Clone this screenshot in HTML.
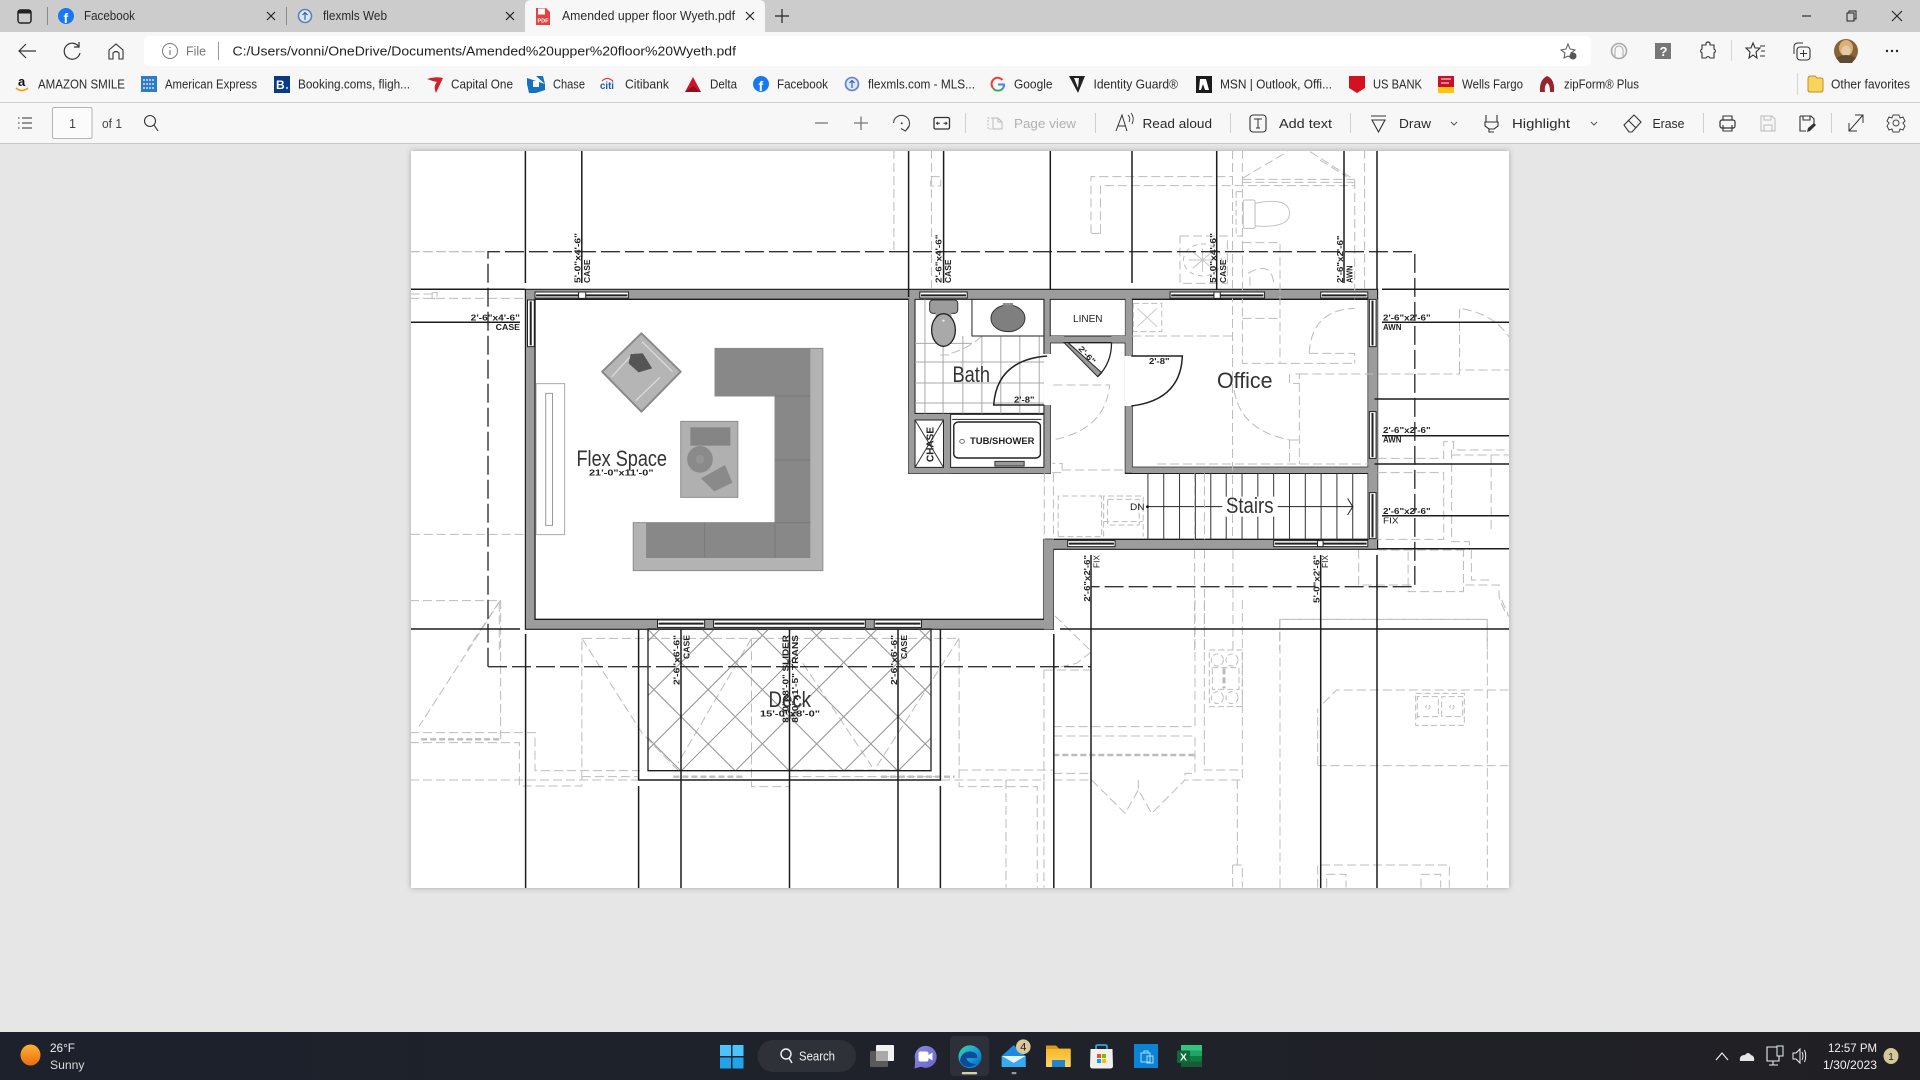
<!DOCTYPE html>
<html><head><meta charset="utf-8"><title>Amended upper floor Wyeth.pdf</title>
<style>
html,body{margin:0;padding:0;width:1920px;height:1080px;overflow:hidden;background:#e6e6e6}
svg{display:block;font-family:"Liberation Sans",sans-serif}
svg *{vector-effect:non-scaling-stroke}
.t{font-size:12.5px;fill:#2a2a2a}
.g{fill:none;stroke:#bcbcbc;stroke-width:1;stroke-dasharray:9 4}
.g2{fill:none;stroke:#bcbcbc;stroke-width:2.4;stroke-dasharray:6 3}
.k{fill:none;stroke:#1c1c1c;stroke-width:1.5}
.d{fill:none;stroke:#333;stroke-width:1.4;stroke-dasharray:19 5}
.l{font-size:8px;font-weight:bold;fill:#222}
.r{font-size:22px;fill:#333}
.w{fill:#fff;stroke:#222;stroke-width:1}
.m{fill:none;stroke:#222;stroke-width:2}
</style></head><body>
<svg width="1920" height="1080" viewBox="0 0 1920 1080" xmlns="http://www.w3.org/2000/svg">
<defs>
<clipPath id="deckclip"><rect x="648" y="629" width="283" height="142"/></clipPath>
<clipPath id="pg"><rect x="411" y="151" width="1098" height="737"/></clipPath>
<linearGradient id="sun" x1="0" y1="0" x2="0" y2="1"><stop offset="0" stop-color="#f9b233"/><stop offset="1" stop-color="#ee6c12"/></linearGradient>
<linearGradient id="tb" x1="0" y1="0" x2="1" y2="0"><stop offset="0" stop-color="#1c212b"/><stop offset=".5" stop-color="#1f222a"/><stop offset="1" stop-color="#202024"/></linearGradient>
<linearGradient id="edge" x1="0" y1="0" x2="1" y2="1"><stop offset="0" stop-color="#3bd4a0"/><stop offset=".55" stop-color="#1a9ad8"/><stop offset="1" stop-color="#0b5fb4"/></linearGradient>
<linearGradient id="meet" x1="0" y1="0" x2="1" y2="1"><stop offset="0" stop-color="#8a8ae8"/><stop offset="1" stop-color="#6a62c8"/></linearGradient>
<linearGradient id="fold" x1="0" y1="0" x2="0" y2="1"><stop offset="0" stop-color="#f9b82a"/><stop offset="1" stop-color="#fcd565"/></linearGradient>
</defs>

<!-- window chrome -->
<rect x="0" y="0" width="1920" height="32" fill="#cccccc"/>
<rect x="0" y="32" width="1920" height="70" fill="#f7f7f7"/>
<rect x="0" y="102" width="1920" height="1" fill="#cfcfcf"/>
<rect x="0" y="103" width="1920" height="40" fill="#f7f7f7"/>
<rect x="0" y="143" width="1920" height="1" fill="#c9c9c9"/>
<rect x="0" y="144" width="1920" height="888" fill="#e6e6e6"/>

<!-- tabs -->
<path d="M525 32 V6 Q525 0 531 0 H759 Q765 0 765 6 V32 Z" fill="#f7f7f7"/>
<rect x="18" y="10" width="13" height="13" rx="2.5" fill="none" stroke="#222" stroke-width="1.5"/><rect x="18" y="10" width="13" height="3.5" fill="#222"/>
<rect x="47" y="7" width="1" height="18" fill="#8a8a8a"/><rect x="286" y="7" width="1" height="18" fill="#8a8a8a"/>
<circle cx="66" cy="16" r="8" fill="#1877f2"/><text x="63.5" y="23" font-size="14" font-weight="bold" fill="#fff">f</text>
<text class="t" x="84" y="20" textLength="51" lengthAdjust="spacingAndGlyphs">Facebook</text>
<path d="M267 12 L275 20 M275 12 L267 20" stroke="#222" stroke-width="1.2" fill="none"/>
<circle cx="305" cy="16" r="6.5" fill="#dce6f7" stroke="#5b82c4" stroke-width="1.6"/><path d="M305 20 V13 M302.5 15 L305 12.5 L307.5 15" stroke="#2e5aa8" stroke-width="1.1" fill="none"/>
<text class="t" x="323" y="20" textLength="64" lengthAdjust="spacingAndGlyphs">flexmls Web</text>
<path d="M506 12 L514 20 M514 12 L506 20" stroke="#222" stroke-width="1.2" fill="none"/>
<path d="M536 8 H546 L550 12 V25 H536 Z" fill="#e8403f"/><rect x="538" y="8.5" width="7" height="6" fill="#fff"/><text x="537.5" y="22.5" font-size="5.5" font-weight="bold" fill="#fff">PDF</text>
<text class="t" x="562" y="20" textLength="173" lengthAdjust="spacingAndGlyphs">Amended upper floor Wyeth.pdf</text>
<path d="M746 12 L754 20 M754 12 L746 20" stroke="#222" stroke-width="1.2" fill="none"/>
<path d="M782 9 V23 M775 16 H789" stroke="#222" stroke-width="1.2" fill="none"/>
<path d="M1802 16 H1811" stroke="#222" stroke-width="1.1"/>
<rect x="1847" y="13" width="7" height="8" fill="none" stroke="#222" stroke-width="1"/><path d="M1849 13 V11 H1856 V19 H1854" fill="none" stroke="#222" stroke-width="1"/>
<path d="M1892 11 L1902 21 M1902 11 L1892 21" stroke="#222" stroke-width="1.1" fill="none"/>

<!-- address row -->
<rect x="144" y="36" width="1447" height="30" rx="5" fill="#fff"/>
<path d="M36 51 H19 M26 44 L19 51 L26 58" fill="none" stroke="#333" stroke-width="1.2"/>
<path d="M79 47 A8 8 0 1 0 80 53 M79 42 V47 H74" fill="none" stroke="#333" stroke-width="1.2"/>
<path d="M109 50 L116 44 L123 50 V59 H119 V53 Q116 50 113 53 V59 H109 Z" fill="none" stroke="#333" stroke-width="1.1"/>
<circle cx="170" cy="51" r="7.5" fill="none" stroke="#777" stroke-width="1"/><path d="M170 50 V55 M170 47 V48" stroke="#777" stroke-width="1.1"/>
<text class="t" x="186" y="55.5" textLength="20" lengthAdjust="spacingAndGlyphs" style="fill:#777">File</text>
<rect x="218" y="42" width="1" height="18" fill="#999"/>
<text class="t" x="232.5" y="55.5" textLength="503.5" lengthAdjust="spacingAndGlyphs" style="font-size:13px;fill:#222">C:/Users/vonni/OneDrive/Documents/Amended%20upper%20floor%20Wyeth.pdf</text>
<path d="M1568 44 L1570 49 L1575 50 L1571 53 L1572 58 L1568 56 L1564 58 L1565 53 L1561 50 L1566 49 Z" fill="none" stroke="#555" stroke-width="1"/><circle cx="1573" cy="56" r="3.5" fill="#555"/>
<circle cx="1619" cy="51" r="7.5" fill="none" stroke="#aaa" stroke-width="1.6"/><path d="M1615 57 V50 A4 4 0 0 1 1623 50 V57" fill="none" stroke="#aaa" stroke-width="1"/>
<rect x="1655" y="43" width="16" height="16" fill="#777"/><text x="1659.5" y="56" font-size="13" font-weight="bold" fill="#fff">?</text>
<path d="M1702 45 H1706 V43 Q1708 41 1710 43 V45 H1714 V49 Q1717 51 1714 53 V58 H1710 Q1708 55 1706 58 H1702 V53 Q1699 51 1702 49 Z" fill="none" stroke="#333" stroke-width="1.1"/>
<rect x="1731" y="40" width="1" height="21" fill="#d5d5d5"/>
<path d="M1753 43 L1755 48 L1760 48 L1756 52 L1757 58 L1753 55 L1749 58 L1750 52 L1746 48 L1751 48 Z" fill="none" stroke="#333" stroke-width="1.1"/><path d="M1760 46 H1765 M1761 51 H1765 M1760 56 H1765" stroke="#333" stroke-width="1"/>
<rect x="1797" y="47" width="13" height="13" rx="3" fill="none" stroke="#333" stroke-width="1.1"/><path d="M1803.5 50 V57 M1800 53.5 H1807 M1794 54 V47 Q1794 43 1798 43 H1803" fill="none" stroke="#333" stroke-width="1"/>
<ellipse cx="1846" cy="51" rx="12" ry="12" fill="#8a6238"/><ellipse cx="1846" cy="48" rx="7" ry="8" fill="#d8b078"/><ellipse cx="1846" cy="51" rx="4.5" ry="5.5" fill="#e8c9a6"/><path d="M1836 58 Q1846 52 1856 58 L1852 63 H1840 Z" fill="#5f4a33"/>
<circle cx="1887" cy="51" r="1.2" fill="#222"/><circle cx="1892" cy="51" r="1.2" fill="#222"/><circle cx="1897" cy="51" r="1.2" fill="#222"/>

<!-- favorites -->
<text x="18" y="86" font-size="13" font-weight="bold" fill="#111">a</text><path d="M16 88 Q22 93 28 88" fill="none" stroke="#f90" stroke-width="1.5"/>
<text class="t" x="38" y="88.5" textLength="87" lengthAdjust="spacingAndGlyphs">AMAZON SMILE</text>
<rect x="141" y="76" width="16" height="16" fill="#2f7cc4"/><path d="M143 80 H155 M143 84 H155 M143 88 H155" stroke="#cfe2f5" stroke-width="1.4" stroke-dasharray="2 1"/>
<text class="t" x="165" y="88.5" textLength="92" lengthAdjust="spacingAndGlyphs">American Express</text>
<rect x="274" y="76" width="16" height="17" fill="#0b3a82"/><text x="276" y="89" font-size="12" font-weight="bold" fill="#fff">B</text><circle cx="287" cy="88" r="1.2" fill="#7ec8f2"/>
<text class="t" x="298" y="88.5" textLength="112" lengthAdjust="spacingAndGlyphs">Booking.coms, fligh...</text>
<path d="M427 79 Q436 76 443 78 L436 93 Q433 86 437 82 Q432 81 427 79Z" fill="#d0222d"/>
<text class="t" x="451" y="88.5" textLength="62" lengthAdjust="spacingAndGlyphs">Capital One</text>
<path d="M536 76 H543 L545 84 M545 84 V90 L536 93 H529 L527 84 V78 Z" fill="#1470c0"/><rect x="533" y="81" width="6" height="6" fill="#f7f7f7"/>
<text class="t" x="553" y="88.5" textLength="32" lengthAdjust="spacingAndGlyphs">Chase</text>
<text x="600" y="89" font-size="10" font-weight="bold" fill="#1560a8" textLength="14" lengthAdjust="spacingAndGlyphs">citi</text><path d="M602 81 Q607 76 613 81" fill="none" stroke="#d22" stroke-width="1"/>
<text class="t" x="625" y="88.5" textLength="44" lengthAdjust="spacingAndGlyphs">Citibank</text>
<path d="M693 77 L701 92 H685 Z" fill="#d3122a"/><path d="M693 86 L701 92 H685 Z" fill="#8d0f20"/>
<text class="t" x="710" y="88.5" textLength="27" lengthAdjust="spacingAndGlyphs">Delta</text>
<circle cx="761" cy="84" r="8" fill="#1877f2"/><text x="758.5" y="91" font-size="14" font-weight="bold" fill="#fff">f</text>
<text class="t" x="777" y="88.5" textLength="51" lengthAdjust="spacingAndGlyphs">Facebook</text>
<circle cx="852" cy="84" r="6.5" fill="#dce6f7" stroke="#5b82c4" stroke-width="1.6"/><path d="M852 88 V81 M849.5 83 L852 80.5 L854.5 83" stroke="#2e5aa8" stroke-width="1.1" fill="none"/>
<text class="t" x="868" y="88.5" textLength="107" lengthAdjust="spacingAndGlyphs">flexmls.com - MLS...</text>
<path d="M1002.5 80 A6 6 0 0 0 993 88" fill="none" stroke="#e94235" stroke-width="2"/><path d="M993 88 A6 6 0 0 0 1003 88" fill="none" stroke="#34a853" stroke-width="2"/><path d="M998 84.5 H1004 Q1004 87 1003 88" fill="none" stroke="#4285f4" stroke-width="2"/>
<text class="t" x="1014" y="88.5" textLength="38.5" lengthAdjust="spacingAndGlyphs">Google</text>
<path d="M1069 76 H1085 L1078 93 Z" fill="#222"/><path d="M1074 78 L1078 88 L1079 78Z" fill="#f7f7f7"/>
<text class="t" x="1093.5" y="88.5" textLength="84.5" lengthAdjust="spacingAndGlyphs">Identity Guard®</text>
<rect x="1196" y="76" width="16" height="17" fill="#1c1c1c"/><path d="M1200 79 L1206 79 L1209 90 L1205 90 L1203 84 L1201 90 H1199Z" fill="#fff"/>
<text class="t" x="1220" y="88.5" textLength="112" lengthAdjust="spacingAndGlyphs">MSN | Outlook, Offi...</text>
<path d="M1349 76 H1365 V88 L1357 93 L1349 88 Z" fill="#d4121f"/>
<text class="t" x="1373" y="88.5" textLength="49" lengthAdjust="spacingAndGlyphs">US BANK</text>
<rect x="1438" y="76" width="16" height="11" fill="#c8102e"/><rect x="1438" y="87" width="16" height="6" fill="#fcc60a"/><path d="M1441 79 H1451 M1441 83 H1449" stroke="#f3a8a8" stroke-width="1.5"/>
<text class="t" x="1462" y="88.5" textLength="61" lengthAdjust="spacingAndGlyphs">Wells Fargo</text>
<path d="M1540 92 Q1539 80 1547 76 Q1555 79 1554 92 H1550 Q1550 84 1547 83 Q1544 86 1545 92 Z" fill="#96232d"/>
<text class="t" x="1564" y="88.5" textLength="75" lengthAdjust="spacingAndGlyphs">zipForm® Plus</text>
<rect x="1797" y="73" width="1" height="22" fill="#d5d5d5"/>
<path d="M1808 79 Q1808 76 1811 76 H1815 L1817 78 H1821 Q1823 78 1823 80 V90 Q1823 92 1821 92 H1810 Q1808 92 1808 90 Z" fill="#f9d45c" stroke="#b9902a" stroke-width="1"/>
<text class="t" x="1831" y="88.5" textLength="79" lengthAdjust="spacingAndGlyphs">Other favorites</text>

<!-- pdf toolbar -->
<path d="M18 118 H19.5 M22 118 H32 M18 123 H19.5 M22 123 H32 M18 128 H19.5 M22 128 H32" stroke="#333" stroke-width="1.1" fill="none"/>
<rect x="52.5" y="107.5" width="39.5" height="31" rx="1.5" fill="#fbfbfb" stroke="#b5b5b5"/>
<text class="t" x="69" y="128" style="fill:#444">1</text>
<text class="t" x="102" y="128" textLength="20" lengthAdjust="spacingAndGlyphs" style="fill:#444">of 1</text>
<circle cx="150" cy="121" r="5.5" fill="none" stroke="#333" stroke-width="1.1"/><path d="M154 125 L158 131" stroke="#333" stroke-width="1.1"/>
<path d="M815 123 H828" stroke="#777" stroke-width="1.3"/>
<path d="M854 123 H868 M861 116.5 V130" stroke="#777" stroke-width="1.3"/>
<path d="M893.5 123 A8 8 0 1 1 906 130 M909 126 L905.5 131 L901 128.5" fill="none" stroke="#444" stroke-width="1.1"/><circle cx="901.7" cy="123.3" r="1" fill="#444"/>
<rect x="934" y="117.5" width="15.5" height="11.5" rx="1.5" fill="none" stroke="#333" stroke-width="1.3"/><path d="M936.5 123.3 H940 M943.5 123.3 H947 M938 122 L936.5 123.3 L938 124.6 M945.5 122 L947 123.3 L945.5 124.6" stroke="#333" stroke-width="1" fill="none"/>
<rect x="965" y="113" width="1" height="20" fill="#cfcfcf"/>
<path d="M993 118 H988 V129 H993" fill="none" stroke="#bbb" stroke-dasharray="2 1.5"/><path d="M993 118 H998 L1002 122 V129 H993 Z M998 118 V122 H1002" fill="none" stroke="#bbb"/>
<text class="t" x="1014" y="128" textLength="62" lengthAdjust="spacingAndGlyphs" style="fill:#b0b0b0;font-size:13px">Page view</text>
<rect x="1095" y="113" width="1" height="20" fill="#cfcfcf"/>
<path d="M1116 131 L1122 115 L1127 131 M1118 126 H1125" fill="none" stroke="#333" stroke-width="1"/><path d="M1128 115 Q1131 118 1129 122 M1131 113 Q1135 118 1132 124" fill="none" stroke="#333" stroke-width=".9"/>
<text class="t" x="1142.5" y="128" textLength="69.5" lengthAdjust="spacingAndGlyphs" style="font-size:13px">Read aloud</text>
<rect x="1230" y="113" width="1" height="20" fill="#cfcfcf"/>
<rect x="1250" y="115" width="16" height="17" rx="3" fill="none" stroke="#333" stroke-width="1.1"/><path d="M1254 119 H1262 M1258 119 V128 M1256 128 H1260" fill="none" stroke="#333"/>
<text class="t" x="1279" y="128" textLength="53" lengthAdjust="spacingAndGlyphs" style="font-size:13px">Add text</text>
<rect x="1350" y="113" width="1" height="20" fill="#cfcfcf"/>
<path d="M1371 116 H1386 M1372 120 H1385 L1378.5 132 Z" fill="none" stroke="#333" stroke-width="1.1"/>
<text class="t" x="1399" y="128" textLength="32" lengthAdjust="spacingAndGlyphs" style="font-size:13px">Draw</text>
<path d="M1451 122 L1454 125 L1457 122" fill="none" stroke="#555"/>
<path d="M1486 115 V122 M1497 115 V122 M1485 122 H1498 V126 L1494 129 H1489 L1485 126 Z M1489 129 V132 H1494" fill="none" stroke="#333" stroke-width="1.1"/>
<text class="t" x="1512" y="128" textLength="58" lengthAdjust="spacingAndGlyphs" style="font-size:13px">Highlight</text>
<path d="M1591 122 L1594 125 L1597 122" fill="none" stroke="#555"/>
<path d="M1624 125 L1634 115 L1641 122 L1632 132 H1629 Z M1628 120 L1636 128" fill="none" stroke="#333" stroke-width="1.1"/>
<text class="t" x="1652.5" y="128" textLength="32" lengthAdjust="spacingAndGlyphs" style="font-size:13px">Erase</text>
<rect x="1703" y="113" width="1" height="20" fill="#cfcfcf"/>
<rect x="1720" y="120" width="15" height="8" rx="2" fill="none" stroke="#333" stroke-width="1.2"/><path d="M1723 120 V116 H1732 V120 M1723 125 V131 H1732 V125" fill="none" stroke="#333" stroke-width="1.1"/>
<path d="M1761 116 H1772 L1775 119 V131 H1761 Z M1764 116 V120 H1771 V116 M1764 131 V125 H1772 V131" fill="none" stroke="#bbb" stroke-width="1"/>
<path d="M1800 116 H1811 L1814 119 V124 M1806 131 H1800 V116 M1803 116 V120 H1810 V116" fill="none" stroke="#333" stroke-width="1.1"/><path d="M1807 132 L1808 128 L1814 123 L1816 125 L1810 131 Z" fill="#333"/>
<rect x="1831" y="113" width="1" height="20" fill="#cfcfcf"/>
<path d="M1849 131 L1863 115 M1855 115 H1863 V123 M1849 123 V131 H1857" fill="none" stroke="#333" stroke-width="1"/>
<circle cx="1896" cy="123" r="3" fill="none" stroke="#444"/><path d="M1893 115 H1899 L1900 118 L1903 117 L1905 121 L1903 123 L1905 126 L1903 130 L1900 129 L1899 132 H1893 L1892 129 L1889 130 L1887 126 L1889 123 L1887 121 L1889 117 L1892 118 Z" fill="none" stroke="#444" stroke-width="1"/>

<!-- PDF page -->
<rect x="411" y="151" width="1098" height="737" fill="#fff" style="filter:drop-shadow(0 0 3px rgba(0,0,0,.28))"/>
<g clip-path="url(#pg)">

<!-- building walls -->
<path d="M525.4 289.3 H1377.6 V549.3 H1053.4 V629.3 H525.4 Z" fill="#9c9c9c" stroke="#1c1c1c" stroke-width="1.2"/>
<g transform="translate(900,150) scale(.39541,.33333)">
 <path d="M-923 448 H22 V970 H380 V578 H570 V970 H1184 V1168 H364 V1408 H-923 Z" fill="#fff" stroke="#1c1c1c" stroke-width="1.3"/>
 <rect x="22" y="448" width="16" height="520" fill="#9c9c9c"/>
 <rect x="22" y="790" width="106" height="180" fill="#9c9c9c"/>
 <rect x="364" y="448" width="16" height="522" fill="#9c9c9c"/>
 <rect x="22" y="952" width="358" height="18" fill="#9c9c9c"/>
 <path d="M38 448 H364 V790 H38 Z" fill="#fff" stroke="#1c1c1c" stroke-width="1"/>
 <rect x="362" y="612" width="20" height="153" fill="#fff"/>
 <rect x="38" y="810" width="72" height="142" fill="#fff" stroke="#222"/>
 <path d="M38 810 L110 952 M110 810 L38 952" stroke="#333" fill="none" stroke-width="1"/>
 <rect x="128" y="793" width="236" height="159" fill="#fff" stroke="#222"/>
 <path d="M132 808 H358" stroke="#222" fill="none"/>
 <rect x="136" y="816" width="219" height="108" rx="12" fill="#fff" stroke="#222" stroke-width="1.4"/>
 <rect x="240" y="934" width="74" height="14" fill="#999" stroke="#333"/>
 <circle cx="157" cy="874" r="6" fill="none" stroke="#777"/>
 <path d="M63 448 V790 M109 590 V790 M159 558 V790 M207 558 V790 M255 558 V790 M303 558 V790 M352 558 V790 M38 580 H182 M38 636 H364 M38 699 H364 M38 759 H364" stroke="#a9a9a9" stroke-width="1" fill="none"/>
 <rect x="182" y="448" width="182" height="110" fill="#fff" stroke="#222"/>
 <ellipse cx="273" cy="505" rx="43" ry="40" fill="#7f7f7f" stroke="#333"/>
 <rect x="260" y="459" width="26" height="8" fill="#8f8f8f"/>
 <rect x="75" y="450" width="71" height="40" rx="9" fill="#9c9c9c" stroke="#333"/>
 <rect x="90" y="486" width="40" height="14" fill="#9c9c9c"/>
 <ellipse cx="110" cy="540" rx="30" ry="49" fill="#a9a9a9" stroke="#222" stroke-width="1.3"/>
 <circle cx="110" cy="512" r="3" fill="#eee"/>
 <rect x="380" y="448" width="190" height="110" fill="#fff" stroke="#222"/>
 <rect x="380" y="558" width="35" height="20" fill="#9c9c9c"/><rect x="535" y="558" width="35" height="20" fill="#9c9c9c"/>
 <path d="M587 448 H1184 V952 H587 Z" fill="#fff" stroke="#1c1c1c" stroke-width="1.3"/>
 <rect x="570" y="448" width="17" height="170" fill="#9c9c9c"/><rect x="570" y="768" width="17" height="200" fill="#9c9c9c"/>
 <rect x="568" y="618" width="22" height="150" fill="#fff"/>
 <rect x="587" y="952" width="597" height="17" fill="#9c9c9c"/>
 <rect x="1184" y="448" width="24" height="720" fill="#9c9c9c"/>
 <rect x="545" y="1172" width="400" height="24" fill="#9c9c9c"/>
 <rect x="364" y="1168" width="24" height="270" fill="#9c9c9c"/>
 <path d="M627 970 V1168 M667 970 V1168 M707 970 V1168 M747 970 V1168 M786 970 V1168 M825 970 V1168 M865 970 V1168 M905 970 V1168 M945 970 V1168 M985 970 V1168 M1025 970 V1168 M1065 970 V1168 M1105 970 V1168 M1145 970 V1168" stroke="#333" stroke-width="1" fill="none"/>
 <rect x="818" y="1040" width="132" height="60" fill="#fff"/>
 <path d="M626 1070 H815 M955 1070 H1145 M1132 1045 L1145 1070 L1132 1095" stroke="#222" fill="none" stroke-width="1"/>
 <circle cx="626" cy="1070" r="4" fill="#111"/>
 <path d="M585 618 H714 Q710 750 585 768" fill="none" stroke="#222" stroke-width="1.5"/>
 <path d="M372 618 Q245 630 237 765 H365" fill="none" stroke="#222" stroke-width="1.5"/>
 <path d="M415 578 L500 680 L510 668 L425 578 Z" fill="#9a9a9a" stroke="#222"/>
 <path d="M535 578 Q535 640 500 680" fill="none" stroke="#222" stroke-width="1.3"/>
</g>

<!-- ghost layer: upper right -->
<g transform="translate(900,150) scale(.39541,.33333)">
 <path class="g" d="M483 250 V80 H841 M507 250 H483 M507 250 V107 H1150 M866 97 H1150 M866 88 H1150 M866 85 L980 5 M1037 5 L1150 90 M1062 30 L1130 80 M841 0 V1168 M866 0 V278 M1150 90 V448 M1175 0 V420"/>
 <rect x="868" y="150" width="30" height="85" rx="5" fill="none" stroke="#bcbcbc"/>
 <path class="g" d="M850 125 V258 H866 M850 125 H866" style="stroke-dasharray:6 3"/>
 <path d="M898 160 Q985 140 985 190 Q985 235 898 228" fill="none" stroke="#c4c4c4"/>
 <rect x="708" y="258" width="120" height="142" class="g"/>
 <circle cx="765" cy="330" r="48" class="g" style="stroke-dasharray:5 4"/>
 <path d="M765 295 V365 M730 330 H800 M740 305 L790 355 M790 305 L740 355" stroke="#c6c6c6" fill="none" stroke-width="1"/>
 <path class="g" d="M866 278 H961 V640 M866 278 V640 H1150 M866 505 H961 M880 370 Q940 330 945 400 M885 380 V410"/>
 <path class="g" d="M1035 610 Q1040 480 1150 475 M1035 610 H1150 V640"/>
 <rect x="590" y="460" width="72" height="85" class="g" style="stroke-dasharray:6 3"/>
 <path d="M600 475 L650 530 M650 475 L600 530" stroke="#ccc" fill="none"/>
 <path class="g" d="M587 558 H845 M130 610 Q180 590 205 560 M102 615 H130"/>
 <path class="g" d="M1415 660 V475 Q1500 490 1540 560 M1210 672 H1415 V660 H1540"/>
 <path class="g" d="M845 720 Q860 840 985 870 M1000 672 H1010 V942 M985 672 V700 H1010 M1010 672 H1200 M985 870 H1010 M985 870 V942 M650 942 H1184"/>
 <path class="g" d="M388 705 H530 Q520 840 385 870 M385 968 H410 V940 H385 M410 960 H570"/>
 <path class="g" d="M365 970 V1168 M388 970 V1168 M745 970 V1168 M770 970 V1168 M745 1200 V1500 M770 1200 V1500 M842 1200 V1500"/>
 <path class="g" d="M400 1160 V1038 H510 V1160 H400 M515 1160 V1038 H615 V1160 M525 1048 H605 V1125 H525 Z M515 1115 H615" style="stroke-dasharray:6 3"/>
 <path class="g" d="M1208 925 H1375 V875 H1400 V900 H1540 M1395 915 H1540 M1495 915 V1140 M1395 900 V1175 H1440 V1200 M1208 968 H1375 V1168 H1208"/>
 <path class="g" d="M1160 1200 V1305 H1300 M1285 1205 V1325 H1425 V1200 M1428 1200 H1210 M1430 1305 H1515 V1340 Q1525 1380 1540 1400 M1445 1200 V1290 H1495"/>
 <path class="g" d="M960 1408 H1485 V1500 M960 1408 V1500"/>
</g>
<!-- ghost: left zone -->
<g transform="translate(410,150) scale(.35714,.33333)">
 <path class="g" d="M0 305 H218 M0 445 H323 M2 1153 H323 M0 1352 H250 V1500 M250 1355 L160 1500 M1355 0 V305 M1460 0 V420 M1458 80 H1486 V108 H1458 Z M2 432 H60 M62 428 H76 V446 H62 Z"/>
</g>
<!-- ghost: deck zone -->
<g transform="translate(410,600) scale(.44643,.33333)">
 <path class="g" d="M203 0 V430 M203 0 L20 380 M0 398 H280 V512 H515 M0 428 H245 V558 H385 V115 H1230 V560 H1405 V863 M385 115 L520 400 L600 510 M765 115 V560 H850 M0 540 H510 M385 530 H510 M765 115 L600 490 M880 190 L1035 500 M1230 115 L1040 510 M1190 540 H1420 V863 M1335 540 V863 M1420 210 H1525 M1420 210 V540 M1230 510 H1440 M850 530 H1190 M850 510 H1100"/>
 <path class="g2" d="M25 418 H200 M590 530 H750 M1055 530 H1220"/>
</g>
<!-- ghost: lower right -->
<g transform="translate(1050,600) scale(.33333)">
 <path class="g" d="M435 0 V380 H10 M10 408 H435 V520 H405 V540 M463 0 V510 H577 M577 0 V540 H405 M562 540 V795 M548 795 H577 V863 M548 795 V863"/>
 <path class="g2" d="M10 465 H435"/>
 <path class="g" d="M10 520 H125 M10 540 H125 M125 540 L225 640 L265 570 M265 540 V570 L305 640 L405 540"/>
 <path class="g" d="M690 863 V58 H1312 V863 M803 863 V795 H1198 V863 M830 863 V823 H888 V863 M1113 863 V823 H1172 V863"/>
 <path class="g" d="M820 310 L860 270 H1375 M803 495 V325 M803 497 H1375 M1355 0 L1375 45"/>
 <path class="g" d="M15 48 L125 155 L80 190 L10 205"/>
 <rect x="478" y="150" width="99" height="170" class="g" style="stroke-dasharray:6 3"/>
 <rect x="487" y="203" width="80" height="65" class="g" style="stroke-dasharray:6 3"/>
 <path d="M522 205 V265" stroke="#bbb" stroke-width="3" stroke-dasharray="6 3"/>
 <circle cx="502" cy="180" r="18" class="g" style="stroke-dasharray:5 3"/><circle cx="546" cy="180" r="18" class="g" style="stroke-dasharray:5 3"/>
 <circle cx="502" cy="293" r="18" class="g" style="stroke-dasharray:5 3"/><circle cx="546" cy="293" r="18" class="g" style="stroke-dasharray:5 3"/>
 <rect x="1097" y="280" width="146" height="96" class="g" style="stroke-dasharray:6 3"/>
 <path class="g" d="M1102 355 V290 H1165 V350 H1102 M1175 350 V290 H1238 V350 H1175" style="stroke-dasharray:6 3"/>
 <circle cx="1134" cy="321" r="6" class="g" style="stroke-dasharray:3 2"/><circle cx="1206" cy="321" r="6" class="g" style="stroke-dasharray:3 2"/>
</g>

<!-- deck -->
<g clip-path="url(#deckclip)" stroke="#9a9a9a" stroke-width="1.1" fill="none">
 <path d="M648 641.2 L931 358.2 M648 695.5 L931 412.5 M648 749.7 L931 466.7 M648 804 L931 521 M648 858.2 L931 575.2 M648 912.5 L931 629.5 M648 966.7 L931 683.7 M648 1021 L931 738"/>
 <path d="M648 738 L931 1021 M648 683.7 L931 966.7 M648 629.5 L931 912.5 M648 575.2 L931 858.2 M648 521 L931 804 M648 466.7 L931 749.7 M648 412.5 L931 695.5 M648 358.2 L931 641.2"/>
</g>
<rect x="648" y="629" width="283" height="141.7" fill="none" stroke="#1c1c1c" stroke-width="1.3"/>
<path class="k" d="M638.6 629 V780 H940.4 V629"/>

<!-- furniture -->
<g transform="translate(410,150) scale(.35714,.33333)">
 <path d="M854 595 H1156 V1262 H625 V1118 H1022 V738 H854 Z" fill="#b3b3b3" stroke="#8d8d8d"/>
 <path d="M854 595 H1121 V1224 H661 V1118 H1022 V738 H854 Z" fill="#888888"/>
 <path d="M825 1118 V1224 M1022 1118 V1224 M1022 1118 H1121 M1022 930 H1121 M1022 738 H1121" stroke="#7a7a7a" fill="none"/>
 <path d="M648 550 L758 665 L648 785 L538 665 Z" fill="#b5b5b5" stroke="#8a8a8a" stroke-linejoin="round" stroke-width="2"/>
 <path d="M650 575 L735 665 M565 680 L625 610 M632 752 L700 682" stroke="#dcdcdc" fill="none" stroke-width="1.2"/>
 <path d="M618 612 L652 610 L678 655 L640 667 L612 640 Z" fill="#555"/>
 <rect x="758" y="814" width="160" height="228" fill="#b0b0b0" stroke="#8d8d8d"/>
 <rect x="785" y="832" width="112" height="55" fill="#858585"/>
 <ellipse cx="812" cy="928" rx="36" ry="40" fill="#8a8a8a"/><ellipse cx="812" cy="928" rx="12" ry="14" fill="#959595"/>
 <path d="M815 985 L882 945 L903 998 L852 1024 Z" fill="#8a8a8a"/>
 <rect x="353" y="701" width="80" height="453" fill="#fff" stroke="#aaa" stroke-width="1"/>
 <rect x="380" y="730" width="19" height="396" fill="#fff" stroke="#999" stroke-width="1"/>
</g>

<!-- windows -->
<g transform="translate(900,150) scale(.39541,.33333)">
 <rect class="w" x="683" y="426" width="239" height="18"/><path class="m" d="M686 436 H919"/><rect class="w" x="794" y="426" width="16" height="19"/>
 <rect class="w" x="1064" y="426" width="119" height="18"/><path class="m" d="M1067 436 H1180"/>
 <rect class="w" x="50" y="426" width="120" height="18"/><path class="m" d="M53 436 H167"/>
 <rect class="w" x="1187" y="448" width="17" height="142"/><rect class="w" x="1187" y="785" width="17" height="140"/><rect class="w" x="1187" y="1028" width="17" height="138"/>
 <path class="m" d="M1195 452 V586 M1195 789 V921 M1195 1032 V1162"/>
 <rect class="w" x="424" y="1172" width="120" height="18"/><path class="m" d="M427 1181 H541"/>
 <rect class="w" x="945" y="1172" width="238" height="18"/><path class="m" d="M948 1181 H1180"/><rect class="w" x="1056" y="1172" width="14" height="18"/>
 <rect class="w" x="0" y="1410" width="54" height="20"/><path class="m" d="M0 1420 H51"/>
</g>
<g transform="translate(410,150) scale(.35714,.33333)">
 <rect class="w" x="350" y="426" width="262" height="18"/><path class="m" d="M353 436 H609"/><rect class="w" x="472" y="426" width="20" height="19"/>
 <rect class="w" x="329" y="450" width="19" height="140"/><path class="m" d="M338 454 V586"/>
 <rect class="w" x="693" y="1410" width="132" height="22"/><path class="m" d="M696 1421 H822"/>
 <rect class="w" x="850" y="1410" width="425" height="22"/><path class="m" d="M853 1421 H1272"/>
 <rect class="w" x="1300" y="1410" width="132" height="22"/><path class="m" d="M1303 1421 H1429"/>
</g>

<!-- dark dashed outline -->
<path class="d" d="M488 666.7 V251.7 H1414.8 V586.7 H1091.5"/>
<path class="d" d="M488 666.7 H1091.5"/>
<path class="g" d="M411 251.7 H488"/>

<!-- heavy lines -->
<g class="k">
 <path d="M525.4 150 V283 M581.8 150 V283 M908.6 150 V297 M943.6 150 V283 M1050.3 150 V290 M1132 150 V283 M1216.7 150 V290 M1344 150 V283 M1377 150 V289"/>
 <path d="M525.6 634 V888 M638.6 786 V888 M681 629 V888 M789.5 629 V888 M898 629 V888 M940.4 786 V888 M1053.8 634 V888 M1091 555 V888 M1320.7 555 V888 M1377 555 V888"/>
 <path d="M411 289.3 H525 M1382 289.3 H1509 M411 322.3 H520 M1382 322.3 H1509 M1374.5 399 H1509 M1382 435.7 H1509 M1374.5 464 H1509 M1382 515.7 H1509 M1378 548.7 H1509 M411 629 H520 M1060 629 H1509"/>
</g>

<!-- room labels -->
<g>
<text class="r" x="576.5" y="466" textLength="90.5" lengthAdjust="spacingAndGlyphs">Flex Space</text>
<text class="l" x="589" y="475.5" textLength="64.5" lengthAdjust="spacingAndGlyphs">21'-0"x11'-0"</text>
<text class="r" x="952.5" y="382" textLength="37.5" lengthAdjust="spacingAndGlyphs">Bath</text>
<text class="r" x="1217" y="388" textLength="55.5" lengthAdjust="spacingAndGlyphs">Office</text>
<text class="r" x="1226" y="513" textLength="47.5" lengthAdjust="spacingAndGlyphs">Stairs</text>
<text class="r" x="768.5" y="707" textLength="42.5" lengthAdjust="spacingAndGlyphs">Deck</text>
<text class="l" x="760" y="716.7" textLength="60" lengthAdjust="spacingAndGlyphs">15'-0"x8'-0"</text>
<text class="l" x="1073" y="322" textLength="29.5" lengthAdjust="spacingAndGlyphs" style="font-weight:normal;font-size:10px">LINEN</text>
<text class="l" x="970" y="444" textLength="64.5" lengthAdjust="spacingAndGlyphs" style="font-size:9.5px">TUB/SHOWER</text>
<text class="l" x="1130" y="510" textLength="14.5" lengthAdjust="spacingAndGlyphs" style="font-weight:normal;font-size:9px">DN</text>
<text class="l" x="1014" y="402.5" textLength="20.5" lengthAdjust="spacingAndGlyphs">2'-8"</text>
<text class="l" x="1149" y="364" textLength="20.5" lengthAdjust="spacingAndGlyphs">2'-8"</text>
<text class="l" transform="translate(1078,349) rotate(48)" textLength="21" lengthAdjust="spacingAndGlyphs">2'-6"</text>
<text class="l" transform="translate(933.5,462) rotate(-90)" textLength="35" lengthAdjust="spacingAndGlyphs" style="font-size:10px">CHASE</text>

<text class="l" x="470.7" y="320.5" textLength="49.3" lengthAdjust="spacingAndGlyphs">2'-6"x4'-6"</text>
<text class="l" x="495.7" y="330" textLength="24.3" lengthAdjust="spacingAndGlyphs">CASE</text>
<text class="l" x="1383" y="320.5" textLength="47.6" lengthAdjust="spacingAndGlyphs">2'-6"x2'-6"</text>
<text class="l" x="1383" y="330" textLength="18.4" lengthAdjust="spacingAndGlyphs">AWN</text>
<text class="l" x="1383" y="433" textLength="47.6" lengthAdjust="spacingAndGlyphs">2'-6"x2'-6"</text>
<text class="l" x="1383" y="442.7" textLength="18.4" lengthAdjust="spacingAndGlyphs">AWN</text>
<text class="l" x="1383" y="514" textLength="47.6" lengthAdjust="spacingAndGlyphs">2'-6"x2'-6"</text>
<text class="l" x="1383" y="523.3" textLength="15.5" lengthAdjust="spacingAndGlyphs" style="font-weight:normal">FIX</text>

<text class="l" transform="translate(580.5,283) rotate(-90)" textLength="50" lengthAdjust="spacingAndGlyphs">5'-0"x4'-6"</text>
<text class="l" transform="translate(590,283) rotate(-90)" textLength="23.5" lengthAdjust="spacingAndGlyphs">CASE</text>
<text class="l" transform="translate(941.5,283) rotate(-90)" textLength="48.5" lengthAdjust="spacingAndGlyphs">2'-6"x4'-6"</text>
<text class="l" transform="translate(951,283) rotate(-90)" textLength="23.5" lengthAdjust="spacingAndGlyphs">CASE</text>
<text class="l" transform="translate(1216,283) rotate(-90)" textLength="50" lengthAdjust="spacingAndGlyphs">5'-0"x4'-6"</text>
<text class="l" transform="translate(1226,283) rotate(-90)" textLength="23.5" lengthAdjust="spacingAndGlyphs">CASE</text>
<text class="l" transform="translate(1343,283) rotate(-90)" textLength="47.5" lengthAdjust="spacingAndGlyphs">2'-6"x2'-6"</text>
<text class="l" transform="translate(1352.5,283) rotate(-90)" textLength="17.5" lengthAdjust="spacingAndGlyphs">AWN</text>
<text class="l" transform="translate(1090,601.7) rotate(-90)" textLength="46.7" lengthAdjust="spacingAndGlyphs">2'-6"x2'-6"</text>
<text class="l" transform="translate(1099.7,568) rotate(-90)" textLength="13" lengthAdjust="spacingAndGlyphs" style="font-weight:normal">FIX</text>
<text class="l" transform="translate(1319.5,603) rotate(-90)" textLength="48" lengthAdjust="spacingAndGlyphs">5'-0"x2'-6"</text>
<text class="l" transform="translate(1328,568) rotate(-90)" textLength="13" lengthAdjust="spacingAndGlyphs" style="font-weight:normal">FIX</text>
<text class="l" transform="translate(679.5,685) rotate(-90)" textLength="50" lengthAdjust="spacingAndGlyphs">2'-6"x6'-6"</text>
<text class="l" transform="translate(689.5,659) rotate(-90)" textLength="24" lengthAdjust="spacingAndGlyphs">CASE</text>
<text class="l" transform="translate(788.5,722.7) rotate(-90)" textLength="87.7" lengthAdjust="spacingAndGlyphs">8'-0"x8'-0" SLIDER</text>
<text class="l" transform="translate(798,722.7) rotate(-90)" textLength="87.7" lengthAdjust="spacingAndGlyphs">8'-0"x1'-5" TRANS</text>
<text class="l" transform="translate(897,685) rotate(-90)" textLength="50" lengthAdjust="spacingAndGlyphs">2'-6"x6'-6"</text>
<text class="l" transform="translate(907,659) rotate(-90)" textLength="24" lengthAdjust="spacingAndGlyphs">CASE</text>
</g>
</g>

<!-- taskbar -->
<rect x="0" y="1032" width="1920" height="48" fill="url(#tb)"/>
<ellipse cx="30.5" cy="1055" rx="10" ry="10.5" fill="url(#sun)"/>
<text x="50" y="1052" font-size="11.5" fill="#f0f0f0" textLength="25" lengthAdjust="spacingAndGlyphs">26°F</text>
<text x="50" y="1069" font-size="12" fill="#d8d8d8" textLength="34.5" lengthAdjust="spacingAndGlyphs">Sunny</text>
<rect x="720" y="1045" width="11" height="11" fill="#4cc2ff"/><rect x="732.5" y="1045" width="11" height="11" fill="#4cc2ff"/><rect x="720" y="1057.5" width="11" height="11" fill="#1fa3ea"/><rect x="732.5" y="1057.5" width="11" height="11" fill="#1fa3ea"/>
<rect x="757.5" y="1040" width="98.5" height="32" rx="16" fill="#2e3137"/>
<circle cx="786" cy="1054" r="5" fill="none" stroke="#f4f4f4" stroke-width="1.4"/><path d="M789 1058 L792 1063" stroke="#f4f4f4" stroke-width="1.4"/>
<text x="799" y="1060.5" font-size="12.5" fill="#f4f4f4" textLength="36" lengthAdjust="spacingAndGlyphs">Search</text>
<!-- task view -->
<rect x="876" y="1045" width="18" height="16" rx="1" fill="#f2f2f2"/><rect x="870" y="1051" width="18" height="16" rx="1" fill="#5a5a5a"/><rect x="876" y="1051" width="12" height="10" fill="#a9a9a9"/>
<!-- meet -->
<path d="M914.7 1056.7 A11 11 0 1 1 921 1066.8 L914.5 1068.5 Q915.5 1062 914.7 1056.7 Z" fill="url(#meet)"/><rect x="918.5" y="1051.5" width="10" height="10" rx="2" fill="#fff"/><path d="M928.5 1055 L932.5 1052.5 V1060.5 L928.5 1058Z" fill="#fff"/>
<!-- edge -->
<rect x="950" y="1036" width="39" height="40" rx="4" fill="#2d3038"/>
<circle cx="970" cy="1056.7" r="11.5" fill="url(#edge)"/><path d="M960 1060 Q962 1051 971 1051.5 Q978 1052.5 977 1058 H966.5 Q967.5 1063.5 976 1064 Q970 1068.5 964.5 1066 Q960.5 1064 960 1060Z" fill="#0c4a9a"/>
<rect x="961.7" y="1072" width="15.5" height="2.4" rx="1.2" fill="#d6d2a8"/>
<!-- mail -->
<path d="M1001.7 1056 L1013.7 1045 L1025.7 1056 V1067 H1001.7 Z" fill="#1f8ae0"/><path d="M1001.7 1056 H1025.7 L1013.7 1063 Z" fill="#e8f4fc"/><path d="M1001.7 1056 L1013.7 1063 L1025.7 1056 V1067 H1001.7 Z" fill="#36aaf2"/>
<circle cx="1023.3" cy="1046.7" r="7.3" fill="#d9c89a"/><text x="1020.3" y="1050.7" font-size="11" fill="#222">4</text>
<rect x="1011.5" y="1072" width="5" height="2.2" rx="1" fill="#9a9a9a"/>
<!-- explorer -->
<path d="M1046 1045.5 H1056 L1059 1048.5 H1070.7 V1067 H1046 Z" fill="#d99a1e"/><rect x="1046" y="1049" width="24.7" height="18" rx="1" fill="url(#fold)"/><rect x="1052" y="1060" width="13" height="7" fill="#1e84d0"/>
<!-- store -->
<path d="M1090.5 1049 H1112.5 L1113 1066 Q1113 1068.5 1110 1068.5 H1093 Q1090 1068.5 1090 1066 Z" fill="#f2f0ec"/><path d="M1096 1049 V1046.5 Q1096 1045 1098 1045 H1105 Q1107 1045 1107 1046.5 V1049" fill="none" stroke="#2ca6e0" stroke-width="1.8"/>
<rect x="1097" y="1054" width="4" height="4" fill="#f25022"/><rect x="1102" y="1054" width="4" height="4" fill="#7fba00"/><rect x="1097" y="1059" width="4" height="4" fill="#00a4ef"/><rect x="1102" y="1059" width="4" height="4" fill="#ffb900"/>
<!-- app -->
<rect x="1134" y="1044" width="24" height="24" fill="#0a84d6"/><path d="M1141 1053 H1150 V1062 H1141 Z M1144 1053 V1051 H1148 V1053 M1147 1056 H1153 V1063 H1147 Z" fill="none" stroke="#a8dcf8" stroke-width="1"/>
<!-- excel -->
<rect x="1181" y="1045" width="21" height="22" fill="#21a366"/><rect x="1181" y="1045" width="21" height="5.5" fill="#33c481"/><rect x="1181" y="1056" width="21" height="5.5" fill="#107c41"/><rect x="1181" y="1061.5" width="21" height="5.5" fill="#185c37"/><rect x="1177" y="1050.5" width="13" height="12.5" rx="1" fill="#0e6b38"/><text x="1180" y="1060.5" font-size="10.5" font-weight="bold" fill="#fff">X</text>
<path d="M1716 1060 L1722 1053 L1728 1060" fill="none" stroke="#eee" stroke-width="1.2"/>
<path d="M1740 1061 Q1739 1055 1745 1055 Q1748 1051 1751 1055 Q1755 1056 1754 1061 Z" fill="#e6e6e6"/>
<rect x="1767" y="1047" width="12" height="14" fill="none" stroke="#eee" stroke-width="1.1"/><rect x="1777" y="1046" width="6" height="10" fill="#20222a" stroke="#eee" stroke-width="1"/><path d="M1773 1061 V1065 M1769 1065 H1778" stroke="#eee" stroke-width="1.1"/>
<path d="M1793 1053 H1796 L1800 1049 V1063 L1796 1059 H1793 Z" fill="none" stroke="#eee" stroke-width="1"/><path d="M1802 1052 Q1804 1056 1802 1060 M1804.5 1050 Q1807 1056 1804.5 1062" fill="none" stroke="#eee" stroke-width="1"/>
<text x="1828" y="1052" font-size="11.5" fill="#f2f2f2" textLength="49" lengthAdjust="spacingAndGlyphs">12:57 PM</text>
<text x="1823" y="1069" font-size="11.5" fill="#f2f2f2" textLength="54" lengthAdjust="spacingAndGlyphs">1/30/2023</text>
<ellipse cx="1891" cy="1056" rx="7.5" ry="8" fill="#d3c896"/><text x="1888.3" y="1060" font-size="10" fill="#222">1</text>
</svg>
</body></html>
